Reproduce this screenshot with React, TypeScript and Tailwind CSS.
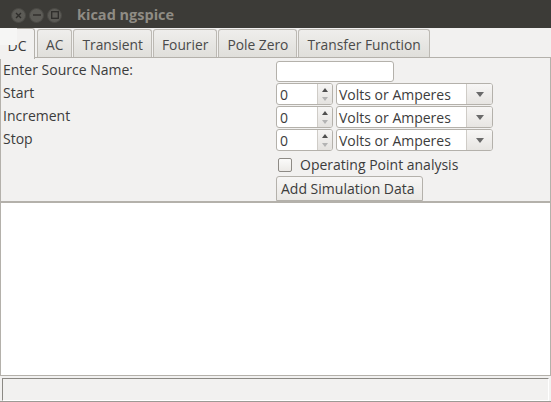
import React from "react";

const tabs = ["AC", "Transient", "Fourier", "Pole Zero", "Transfer Function"];
const labels = ["Enter Source Name:", "Start", "Increment", "Stop"];

function TitleButton({ children }: { children: React.ReactNode }) {
  return (
    <span className="flex h-[15px] w-[15px] items-center justify-center rounded-full bg-[#5c5b56] border border-[#4a4945]">
      {children}
    </span>
  );
}

function SpinRow() {
  return (
    <div className="flex h-[22px] gap-[3px]">
      {/* spin box */}
      <div className="flex w-[57px] rounded-[3px] border border-[#b4b1ab] bg-white overflow-hidden">
        <div className="flex flex-1 items-center pl-[3px] pt-[2px]">0</div>
        <div className="flex w-[15px] flex-col items-center justify-center gap-[5px] border-l border-[#cfccc7] bg-gradient-to-b from-[#f6f5f4] to-[#e4e2df]">
          <svg width="6" height="4" viewBox="0 0 6 4"><path d="M0 4 L3 0 L6 4 Z" fill="#4f4f4f" /></svg>
          <svg width="6" height="4" viewBox="0 0 6 4"><path d="M0 0 L3 4 L6 0 Z" fill="#b3b3b3" /></svg>
        </div>
      </div>
      {/* combo box */}
      <div className="flex w-[157px] rounded-[3px] border border-[#b4b1ab] bg-white overflow-hidden">
        <div className="flex flex-1 items-center whitespace-nowrap pl-[2px] pt-[2px]">Volts or Amperes</div>
        <div className="flex w-[26px] items-center justify-center border-l border-[#cfccc7] bg-gradient-to-b from-[#f7f6f5] to-[#e7e5e2]">
          <svg width="8" height="5" viewBox="0 0 8 5"><path d="M0 0 L4 5 L8 0 Z" fill="#6a6a6a" /></svg>
        </div>
      </div>
    </div>
  );
}

export default function App() {
  return (
    <div className="flex h-[402px] w-[551px] flex-col overflow-hidden bg-[#f2f1f0] font-['Open_Sans',sans-serif] text-[14px] leading-[20px] text-[#3c3c3c]">
      {/* Title bar */}
      <div className="flex h-[28px] shrink-0 items-center bg-[#3c3b37] pl-[11px] pt-[2px]">
        <div className="flex gap-[3px]">
          <TitleButton>
            <svg width="7" height="7" viewBox="0 0 7 7"><path d="M1 1 L6 6 M6 1 L1 6" stroke="#2e2d2a" strokeWidth="1.4" /></svg>
          </TitleButton>
          <TitleButton>
            <svg width="8" height="2" viewBox="0 0 8 2"><path d="M0 1 H8" stroke="#2e2d2a" strokeWidth="1.4" /></svg>
          </TitleButton>
          <TitleButton>
            <svg width="8" height="8" viewBox="0 0 8 8"><rect x="0.7" y="0.7" width="6.6" height="6.6" fill="none" stroke="#2e2d2a" strokeWidth="1.3" /></svg>
          </TitleButton>
        </div>
        <span className="ml-[15px] text-[14.5px] font-bold text-[#8f8c84]">kicad ngspice</span>
      </div>

      {/* Tab strip */}
      <div className="relative flex h-[30px] shrink-0 items-end">
        <div className="z-10 flex h-[31px] w-[35px] -mb-px items-center justify-center rounded-tr-[3px] border-r border-t border-[#b4b1ab] bg-[#f2f1f0] pt-[3px]">
          DC
        </div>
        {/* render glitch over the selected tab */}
        <span className="absolute left-0 top-0 z-20 h-[17px] w-[17px] bg-[#f6f6f5]" />
        <div className="flex h-full flex-1 items-end gap-[1px] border-b border-[#b4b1ab] pl-[2px]">
          {tabs.map((t) => (
            <div
              key={t}
              className="flex h-[28px] items-center whitespace-nowrap rounded-t-[3px] border border-b-0 border-[#bcb9b3] bg-gradient-to-b from-[#efeeec] to-[#e0dfdb] px-[8px] pt-[3px] text-[13.8px] text-[#4a4a4a]"
            >
              {t}
            </div>
          ))}
        </div>
      </div>

      {/* DC panel */}
      <div className="flex h-[144px] shrink-0 overflow-hidden border-x border-b border-[#b4b1ab]">
        <div className="flex w-[275px] flex-col pl-[2px]">
          {labels.map((l) => (
            <div key={l} className="h-[23px] leading-[23px]">{l}</div>
          ))}
        </div>
        <div className="flex flex-col pt-[3px]">
          <div className="h-[22px] w-[118px] rounded-[3px] border border-[#b4b1ab] bg-white" />
          <div className="mt-px flex flex-col gap-px">
            <SpinRow />
            <SpinRow />
            <SpinRow />
          </div>
          <div className="mt-[6px] flex h-[16px] items-center">
            <span className="ml-[2px] h-[14px] w-[14px] rounded-[2px] border border-[#8e8b86] bg-gradient-to-b from-[#fbfbfa] to-[#eceae7]" />
            <span className="ml-[8px]">Operating Point analysis</span>
          </div>
          <div className="mt-[3px] flex h-[26px] w-[147px] items-start whitespace-nowrap rounded-t-[3px] border border-[#b4b1ab] bg-gradient-to-b from-[#f7f6f5] to-[#eae8e5] pl-[4px] pt-[2px]">
            Add Simulation Data
          </div>
        </div>
      </div>

      {/* Output area */}
      <div className="h-[174px] shrink-0 border border-[#b4b1ab] bg-white" />

      {/* Status bar */}
      <div className="flex flex-1 flex-col px-[2px] pt-[2px]">
        <div className="h-[23px] border-l border-t border-[#8b8984] border-r-white border-b-white border-r border-b bg-[#f2f1f0]" />
      </div>
      <div className="h-px shrink-0 bg-[#9c9a95]" />
    </div>
  );
}
